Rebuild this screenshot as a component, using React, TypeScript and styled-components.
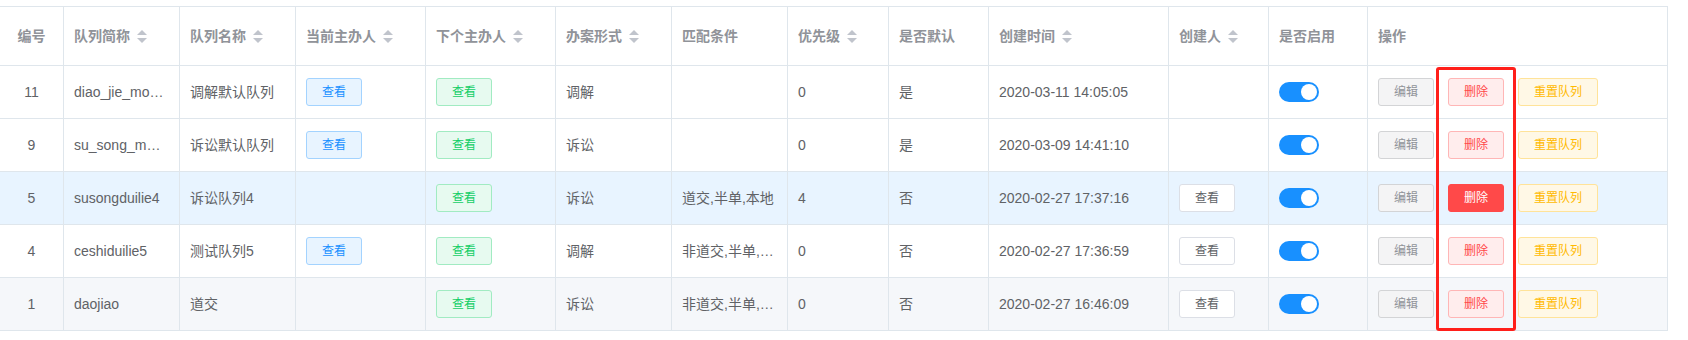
import styled, { createGlobalStyle, css } from "styled-components";

const GlobalStyle = createGlobalStyle`
  body {
    margin: 0;
    background: #fff;
    font-family: "Liberation Sans", "Noto Sans CJK SC", sans-serif;
  }
`;

const COLS = "64px 116px 116px 130px 130px 116px 116px 101px 100px 180px 100px 99px 300px";

const Page = styled.div`
  padding-top: 6px;
  width: 1668px;
`;

const Table = styled.div`
  position: relative;
  border-top: 1px solid #dfe6ec;
`;

const Row = styled.div<{ $bg?: string; $head?: boolean }>`
  display: grid;
  grid-template-columns: ${COLS};
  height: ${({ $head }) => ($head ? "59px" : "53px")};
  background: ${({ $bg }) => $bg || "#fff"};
`;

const Cell = styled.div<{ $center?: boolean; $head?: boolean }>`
  box-sizing: border-box;
  display: flex;
  align-items: center;
  justify-content: ${({ $center }) => ($center ? "center" : "flex-start")};
  padding: 0 10px;
  border-right: 1px solid #dfe6ec;
  border-bottom: 1px solid #dfe6ec;
  font-size: 14px;
  line-height: 23px;
  white-space: nowrap;
  overflow: hidden;
  color: ${({ $head }) => ($head ? "#909399" : "#606266")};
  font-weight: ${({ $head }) => ($head ? 700 : 400)};
`;

const Caret = styled.svg`
  margin-left: 7px;
  flex: none;
`;

const Ops = styled.div`
  display: flex;
  gap: 14px;
`;

type Variant = "primary" | "success" | "info" | "danger" | "dangerSolid" | "warning" | "plain";

const palette: Record<Variant, [string, string, string]> = {
  primary: ["#e8f4ff", "#a3d3ff", "#1890ff"],
  success: ["#e7faf0", "#a1ebc2", "#13ce66"],
  info: ["#f4f4f5", "#d3d4d6", "#909399"],
  danger: ["#ffeded", "#ffb6b6", "#ff4949"],
  dangerSolid: ["#ff4949", "#ff4949", "#ffffff"],
  warning: ["#fff8e6", "#ffe399", "#ffba00"],
  plain: ["#ffffff", "#dcdfe6", "#606266"],
};

const Button = styled.button<{ $variant: Variant }>`
  box-sizing: border-box;
  height: 28px;
  padding: 0 15px;
  border-radius: 3px;
  font-family: inherit;
  font-size: 12px;
  line-height: 26px;
  cursor: pointer;
  ${({ $variant }) => {
    const [bg, border, color] = palette[$variant];
    return css`
      background: ${bg};
      border: 1px solid ${border};
      color: ${color};
    `;
  }}
`;

const Switch = styled.span`
  position: relative;
  display: inline-block;
  width: 40px;
  height: 20px;
  border-radius: 10px;
  background: #1890ff;

  &::after {
    content: "";
    position: absolute;
    top: 2px;
    left: 22px;
    width: 16px;
    height: 16px;
    border-radius: 50%;
    background: #fff;
  }
`;

const Highlight = styled.div`
  position: absolute;
  left: 1436px;
  top: 60px;
  width: 80px;
  height: 264px;
  box-sizing: border-box;
  border: 3px solid #ff1f1a;
  border-radius: 3px;
  pointer-events: none;
`;

const SortIcon = () => (
  <Caret width="10" height="13" viewBox="0 0 10 13">
    <path d="M0 5 L5 0 L10 5 Z" fill="#c0c4cc" />
    <path d="M0 8 L10 8 L5 13 Z" fill="#c0c4cc" />
  </Caret>
);

const headers: { label: string; sort?: boolean; center?: boolean }[] = [
  { label: "编号", center: true },
  { label: "队列简称", sort: true },
  { label: "队列名称", sort: true },
  { label: "当前主办人", sort: true },
  { label: "下个主办人", sort: true },
  { label: "办案形式", sort: true },
  { label: "匹配条件" },
  { label: "优先级", sort: true },
  { label: "是否默认" },
  { label: "创建时间", sort: true },
  { label: "创建人", sort: true },
  { label: "是否启用" },
  { label: "操作" },
];

interface Queue {
  id: number;
  code: string;
  name: string;
  current: boolean;
  form: string;
  match: string;
  priority: number;
  isDefault: string;
  created: string;
  creator: boolean;
  active?: boolean;
  bg?: string;
}

const rows: Queue[] = [
  { id: 11, code: "diao_jie_mo…", name: "调解默认队列", current: true, form: "调解", match: "", priority: 0, isDefault: "是", created: "2020-03-11 14:05:05", creator: false },
  { id: 9, code: "su_song_m…", name: "诉讼默认队列", current: true, form: "诉讼", match: "", priority: 0, isDefault: "是", created: "2020-03-09 14:41:10", creator: false },
  { id: 5, code: "susongduilie4", name: "诉讼队列4", current: false, form: "诉讼", match: "道交,半单,本地", priority: 4, isDefault: "否", created: "2020-02-27 17:37:16", creator: true, active: true, bg: "#e8f4ff" },
  { id: 4, code: "ceshiduilie5", name: "测试队列5", current: true, form: "调解", match: "非道交,半单,…", priority: 0, isDefault: "否", created: "2020-02-27 17:36:59", creator: true },
  { id: 1, code: "daojiao", name: "道交", current: false, form: "诉讼", match: "非道交,半单,…", priority: 0, isDefault: "否", created: "2020-02-27 16:46:09", creator: true, bg: "#f5f7fa" },
];

export default function App() {
  return (
    <>
      <GlobalStyle />
      <Page>
        <Table>
          <Row $head>
            {headers.map((h) => (
              <Cell key={h.label} $head $center={h.center}>
                {h.label}
                {h.sort && <SortIcon />}
              </Cell>
            ))}
          </Row>
          {rows.map((r) => (
            <Row key={r.id} $bg={r.bg}>
              <Cell $center>{r.id}</Cell>
              <Cell>{r.code}</Cell>
              <Cell>{r.name}</Cell>
              <Cell>{r.current && <Button $variant="primary">查看</Button>}</Cell>
              <Cell>
                <Button $variant="success">查看</Button>
              </Cell>
              <Cell>{r.form}</Cell>
              <Cell>{r.match}</Cell>
              <Cell>{r.priority}</Cell>
              <Cell>{r.isDefault}</Cell>
              <Cell>{r.created}</Cell>
              <Cell>{r.creator && <Button $variant="plain">查看</Button>}</Cell>
              <Cell>
                <Switch />
              </Cell>
              <Cell>
                <Ops>
                  <Button $variant="info">编辑</Button>
                  <Button $variant={r.active ? "dangerSolid" : "danger"}>删除</Button>
                  <Button $variant="warning">重置队列</Button>
                </Ops>
              </Cell>
            </Row>
          ))}
          <Highlight />
        </Table>
      </Page>
    </>
  );
}
